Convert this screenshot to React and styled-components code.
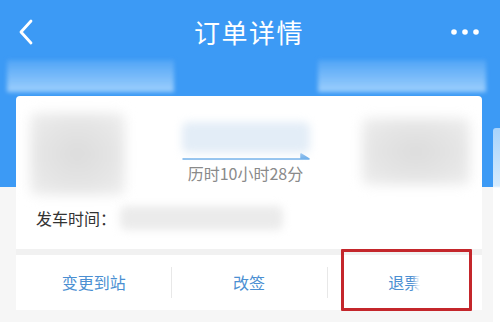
import React from 'react'
import styled, { createGlobalStyle } from 'styled-components'

const GlobalStyle = createGlobalStyle`
  html, body {
    margin: 0;
    padding: 0;
    background: #f5f5f5;
  }
  body {
    font-family: "Noto Sans CJK SC", "Noto Sans", sans-serif;
  }
`

const Page = styled.div`
  width: 500px;
  height: 322px;
  overflow: hidden;
  background: linear-gradient(to bottom, #3c9af5 0, #3c9af5 187px, #f6f6f6 187px);
`

const NavBar = styled.div`
  height: 60px;
  padding-top: 4px;
  box-sizing: border-box;
  display: flex;
  align-items: center;
  justify-content: space-between;
  padding-left: 18px;
  padding-right: 20px;
`

const Title = styled.div`
  color: #ffffff;
  font-size: 26px;
  line-height: 30px;
  letter-spacing: 1.5px;
`

const IconSlot = styled.div`
  width: 32px;
  display: flex;
  justify-content: ${p => (p.right ? 'flex-end' : 'flex-start')};
`

const StripRow = styled.div`
  height: 32px;
  margin-bottom: 4px;
  display: flex;
  justify-content: space-between;
  padding: 0 14px 0 7px;
`

const Strip = styled.div`
  width: ${p => p.w}px;
  height: 32px;
  background: linear-gradient(to bottom, rgba(120, 185, 250, 0.35), rgba(190, 225, 255, 0.75));
  filter: blur(2px);
`

const Body = styled.div`
  display: flex;
  align-items: flex-start;
  padding-left: 16px;
`

const Card = styled.div`
  position: relative;
  width: 466px;
  flex-shrink: 0;
  background: #ffffff;
  border-radius: 4px 4px 0 0;
`

const Peek = styled.div`
  margin-left: 11px;
  margin-top: 32px;
  width: 20px;
  height: 200px;
  flex-shrink: 0;
  background: linear-gradient(to bottom, #a8d3fb 0, #d6ebfd 58px, #ffffff 60px);
  border-radius: 3px 0 0 0;
`

const TrainRow = styled.div`
  padding: 17px 12px 0 14px;
  display: grid;
  grid-template-columns: 95px 1fr 108px;
  align-items: start;
`

const Blur = styled.div`
  width: ${p => p.w}px;
  height: ${p => p.h}px;
  margin-top: ${p => p.top || 0}px;
  background: ${p => p.color || 'radial-gradient(ellipse at center, #dcdcdc 0, #e6e6e6 60%, #efefef 100%)'};
  filter: blur(${p => p.blur || 6}px);
  border-radius: 6px;
`

const Middle = styled.div`
  display: flex;
  flex-direction: column;
  align-items: center;
  padding-top: 9px;
  padding-left: 4px;
`

const Duration = styled.div`
  color: #8a8a8a;
  font-size: 16px;
  line-height: 20px;
  margin-top: 2px;
`

const DepartRow = styled.div`
  margin-top: 11px;
  padding-left: 20px;
  display: flex;
  align-items: center;
  height: 24px;
`

const Label = styled.div`
  color: #333333;
  font-size: 16px;
  width: 84px;
  flex-shrink: 0;
`

const Separator = styled.div`
  margin-top: 19px;
  height: 6px;
  background: #f1f1f1;
`

const ActionRow = styled.div`
  display: grid;
  grid-template-columns: repeat(3, 1fr);
  height: 55px;
  align-items: center;
`

const Action = styled.div`
  position: relative;
  text-align: center;
  color: #4b8fd2;
  font-size: 16px;
  line-height: 55px;

  & + &::before {
    content: '';
    position: absolute;
    left: 0;
    top: 12px;
    height: 31px;
    width: 1px;
    background: #e8e8e8;
  }
`

const Smudge = styled.span`
  position: absolute;
  left: 88px;
  top: 16px;
  width: 26px;
  height: 24px;
  background: rgba(255, 255, 255, 0.85);
  filter: blur(2px);
`

const Highlight = styled.div`
  position: absolute;
  left: 325px;
  top: 153px;
  width: 131px;
  height: 62px;
  box-sizing: border-box;
  border: 3px solid #c4262b;
  border-radius: 1px;
`

const Back = () => (
  <svg width="16" height="26" viewBox="0 0 16 26">
    <path d="M13 2 L3 13 L13 24" fill="none" stroke="#ffffff" strokeWidth="2.8" strokeLinecap="round" strokeLinejoin="round" />
  </svg>
)

const More = () => (
  <svg width="30" height="8" viewBox="0 0 30 8">
    <circle cx="4" cy="4" r="2.8" fill="#ffffff" />
    <circle cx="15" cy="4" r="2.8" fill="#ffffff" />
    <circle cx="26" cy="4" r="2.8" fill="#ffffff" />
  </svg>
)

const Arrow = () => (
  <svg width="130" height="8" viewBox="0 0 130 8">
    <path d="M2 6 H128 L120 1 V6 Z" fill="#6eaeea" stroke="#6eaeea" strokeWidth="1.5" strokeLinejoin="round" />
  </svg>
)

const App = () => (
  <Page>
    <GlobalStyle />
    <NavBar>
      <IconSlot><Back /></IconSlot>
      <Title>订单详情</Title>
      <IconSlot right><More /></IconSlot>
    </NavBar>
    <StripRow>
      <Strip w={167} />
      <Strip w={168} />
    </StripRow>
    <Body>
      <Card>
        <TrainRow>
          <Blur w={95} h={82} />
          <Middle>
            <Blur w={128} h={31} color="#e3edf7" blur={4} />
            <Arrow />
            <Duration>历时10小时28分</Duration>
          </Middle>
          <Blur w={108} h={67} top={5} />
        </TrainRow>
        <DepartRow>
          <Label>发车时间：</Label>
          <Blur w={163} h={24} color="#ebebeb" blur={4} />
        </DepartRow>
        <Separator />
        <ActionRow>
          <Action>变更到站</Action>
          <Action>改签</Action>
          <Action>退票<Smudge /></Action>
        </ActionRow>
        <Highlight />
      </Card>
      <Peek />
    </Body>
  </Page>
)

export default App
